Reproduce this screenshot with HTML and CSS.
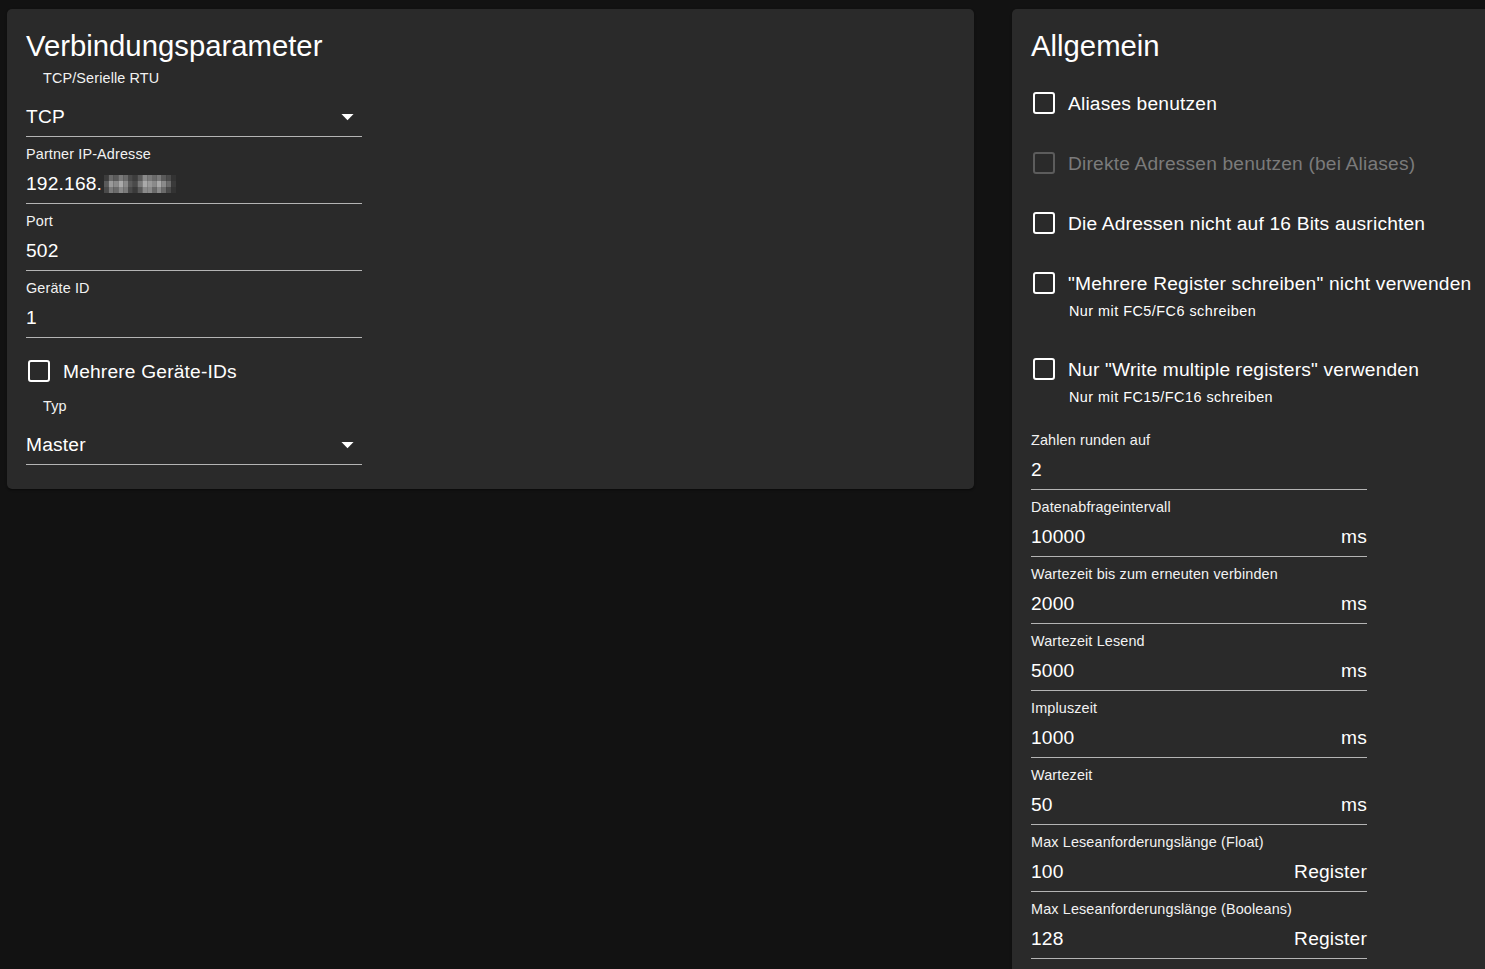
FILE: index.html
```html
<!DOCTYPE html>
<html lang="de">
<head>
<meta charset="utf-8">
<title>Modbus Einstellungen</title>
<link rel="stylesheet" href="styles.css">
</head>
<body>
<div class="page">
  <section class="card card-left">
    <h2 class="card-title">Verbindungsparameter</h2>

    <div class="select select-first">
      <div class="select-label">TCP/Serielle RTU</div>
      <div class="select-row">
        <span class="select-value">TCP</span>
        <svg class="arrow" viewBox="0 0 24 24" width="29" height="29"><path d="M7 10l5 5 5-5z" fill="#fff"/></svg>
      </div>
    </div>

    <div class="field">
      <div class="field-label">Partner IP-Adresse</div>
      <div class="field-row">
        <span class="field-value">192.168.<svg class="blur" width="72" height="18" viewBox="0 0 15 3" preserveAspectRatio="none">
          <rect x="0" y="0" width="1" height="1" fill="#3c3c3c"/><rect x="1" y="0" width="1" height="1" fill="#6a6a6a"/><rect x="2" y="0" width="1" height="1" fill="#5a5a5a"/><rect x="3" y="0" width="1" height="1" fill="#7a7a7a"/><rect x="4" y="0" width="1" height="1" fill="#6a6a6a"/><rect x="5" y="0" width="1" height="1" fill="#4a4a4a"/><rect x="6" y="0" width="1" height="1" fill="#3d3d3d"/><rect x="7" y="0" width="1" height="1" fill="#5a5a5a"/><rect x="8" y="0" width="1" height="1" fill="#8a8a8a"/><rect x="9" y="0" width="1" height="1" fill="#7a7a7a"/><rect x="10" y="0" width="1" height="1" fill="#6a6a6a"/><rect x="11" y="0" width="1" height="1" fill="#7a7a7a"/><rect x="12" y="0" width="1" height="1" fill="#5a5a5a"/><rect x="13" y="0" width="1" height="1" fill="#4a4a4a"/><rect x="14" y="0" width="1" height="1" fill="#333333"/>
          <rect x="0" y="1" width="1" height="1" fill="#5a5a5a"/><rect x="1" y="1" width="1" height="1" fill="#9a9a9a"/><rect x="2" y="1" width="1" height="1" fill="#8a8a8a"/><rect x="3" y="1" width="1" height="1" fill="#aaaaaa"/><rect x="4" y="1" width="1" height="1" fill="#8a8a8a"/><rect x="5" y="1" width="1" height="1" fill="#5a5a5a"/><rect x="6" y="1" width="1" height="1" fill="#4a4a4a"/><rect x="7" y="1" width="1" height="1" fill="#7a7a7a"/><rect x="8" y="1" width="1" height="1" fill="#aaaaaa"/><rect x="9" y="1" width="1" height="1" fill="#9a9a9a"/><rect x="10" y="1" width="1" height="1" fill="#8a8a8a"/><rect x="11" y="1" width="1" height="1" fill="#aaaaaa"/><rect x="12" y="1" width="1" height="1" fill="#8a8a8a"/><rect x="13" y="1" width="1" height="1" fill="#6a6a6a"/><rect x="14" y="1" width="1" height="1" fill="#3a3a3a"/>
          <rect x="0" y="2" width="1" height="1" fill="#4a4a4a"/><rect x="1" y="2" width="1" height="1" fill="#7a7a7a"/><rect x="2" y="2" width="1" height="1" fill="#6a6a6a"/><rect x="3" y="2" width="1" height="1" fill="#8a8a8a"/><rect x="4" y="2" width="1" height="1" fill="#7a7a7a"/><rect x="5" y="2" width="1" height="1" fill="#4a4a4a"/><rect x="6" y="2" width="1" height="1" fill="#3a3a3a"/><rect x="7" y="2" width="1" height="1" fill="#5a5a5a"/><rect x="8" y="2" width="1" height="1" fill="#8a8a8a"/><rect x="9" y="2" width="1" height="1" fill="#8a8a8a"/><rect x="10" y="2" width="1" height="1" fill="#6a6a6a"/><rect x="11" y="2" width="1" height="1" fill="#8a8a8a"/><rect x="12" y="2" width="1" height="1" fill="#6a6a6a"/><rect x="13" y="2" width="1" height="1" fill="#4a4a4a"/><rect x="14" y="2" width="1" height="1" fill="#333333"/>
        </svg></span>
      </div>
    </div>

    <div class="field">
      <div class="field-label">Port</div>
      <div class="field-row"><span class="field-value">502</span></div>
    </div>

    <div class="field">
      <div class="field-label">Geräte ID</div>
      <div class="field-row"><span class="field-value">1</span></div>
    </div>

    <label class="check check-left">
      <span class="box"></span>
      <span class="check-text">Mehrere Geräte-IDs</span>
    </label>

    <div class="select select-second">
      <div class="select-label">Typ</div>
      <div class="select-row">
        <span class="select-value">Master</span>
        <svg class="arrow" viewBox="0 0 24 24" width="29" height="29"><path d="M7 10l5 5 5-5z" fill="#fff"/></svg>
      </div>
    </div>
  </section>

  <section class="card card-right">
    <h2 class="card-title">Allgemein</h2>

    <div class="checks">
      <div class="check-item">
        <label class="check"><span class="box"></span><span class="check-text">Aliases benutzen</span></label>
      </div>
      <div class="check-item">
        <label class="check disabled"><span class="box"></span><span class="check-text">Direkte Adressen benutzen (bei Aliases)</span></label>
      </div>
      <div class="check-item">
        <label class="check"><span class="box"></span><span class="check-text">Die Adressen nicht auf 16 Bits ausrichten</span></label>
      </div>
      <div class="check-item">
        <label class="check"><span class="box"></span><span class="check-text">"Mehrere Register schreiben" nicht verwenden</span></label>
        <div class="helper">Nur mit FC5/FC6 schreiben</div>
      </div>
      <div class="check-item">
        <label class="check"><span class="box"></span><span class="check-text">Nur "Write multiple registers" verwenden</span></label>
        <div class="helper">Nur mit FC15/FC16 schreiben</div>
      </div>
    </div>

    <div class="fields">
      <div class="field">
        <div class="field-label">Zahlen runden auf</div>
        <div class="field-row"><span class="field-value">2</span></div>
      </div>
      <div class="field">
        <div class="field-label">Datenabfrageintervall</div>
        <div class="field-row"><span class="field-value">10000</span><span class="suffix">ms</span></div>
      </div>
      <div class="field">
        <div class="field-label">Wartezeit bis zum erneuten verbinden</div>
        <div class="field-row"><span class="field-value">2000</span><span class="suffix">ms</span></div>
      </div>
      <div class="field">
        <div class="field-label">Wartezeit Lesend</div>
        <div class="field-row"><span class="field-value">5000</span><span class="suffix">ms</span></div>
      </div>
      <div class="field">
        <div class="field-label">Impluszeit</div>
        <div class="field-row"><span class="field-value">1000</span><span class="suffix">ms</span></div>
      </div>
      <div class="field">
        <div class="field-label">Wartezeit</div>
        <div class="field-row"><span class="field-value">50</span><span class="suffix">ms</span></div>
      </div>
      <div class="field">
        <div class="field-label">Max Leseanforderungslänge (Float)</div>
        <div class="field-row"><span class="field-value">100</span><span class="suffix">Register</span></div>
      </div>
      <div class="field">
        <div class="field-label">Max Leseanforderungslänge (Booleans)</div>
        <div class="field-row"><span class="field-value">128</span><span class="suffix">Register</span></div>
      </div>
    </div>
  </section>
</div>
</body>
</html>
```

FILE: styles.css
```css
html, body {
  margin: 0;
  padding: 0;
  background: #121212;
  height: 969px;
  overflow: hidden;
  font-family: "Liberation Sans", Arial, sans-serif;
  color: #fff;
}

.page {
  display: flex;
  align-items: flex-start;
  gap: 38px;
  padding: 9px 0 0 7px;
  height: 960px;
}

.card {
  box-sizing: border-box;
  background: #2a2a2a;
  border-radius: 5px;
  box-shadow: 0 2px 1px -1px rgba(0,0,0,0.2), 0 1px 1px 0 rgba(0,0,0,0.14), 0 1px 3px 0 rgba(0,0,0,0.12);
  padding: 19px 19px 24px 19px;
}

.card-left {
  flex: 0 0 967px;
}

.card-right {
  flex: 1 1 auto;
  min-width: 0;
  height: 960px;
  overflow: hidden;
  padding-right: 0;
  padding-bottom: 0;
  border-radius: 5px 0 0 0;
}

.card-title {
  margin: 0;
  padding-top: 1px;
  font-size: 29.3px;
  line-height: 34px;
  font-weight: 400;
  color: #fff;
}

/* select */
.select {
  width: 336px;
  margin-top: 7px;
}

.select-label {
  font-size: 14.4px;
  line-height: 17px;
  padding-left: 17px;
  color: #f2f2f2;
  letter-spacing: 0.14px;
}

.select-row {
  display: flex;
  align-items: center;
  justify-content: space-between;
  padding: 18px 0 8px 0;
  height: 23px;
  border-bottom: 1px solid #b4b4b4;
}

.select-value {
  font-size: 19.2px;
  line-height: 23px;
  letter-spacing: 0.18px;
}

.arrow {
  display: block;
  margin: -3px 0;
}

/* text fields */
.field {
  width: 336px;
  margin-top: 9px;
}

.field-label {
  font-size: 14.4px;
  line-height: 17px;
  color: #f2f2f2;
  letter-spacing: 0.14px;
}

.field-row {
  display: flex;
  align-items: baseline;
  justify-content: space-between;
  padding: 9px 0 8px 0;
  height: 23px;
  border-bottom: 1px solid #b4b4b4;
}

.field-value {
  font-size: 19.2px;
  line-height: 23px;
  letter-spacing: 0.18px;
  white-space: nowrap;
}

.suffix {
  font-size: 19.2px;
  line-height: 23px;
  letter-spacing: 0.18px;
}

.blur {
  display: inline-block;
  vertical-align: -3px;
  margin-left: 2px;
}

/* checkboxes */
.check {
  display: flex;
  align-items: center;
  height: 40px;
}

.box {
  flex: 0 0 auto;
  box-sizing: border-box;
  width: 22px;
  height: 22px;
  margin-left: 1.5px;
  margin-right: 13.5px;
  border: 2px solid #fff;
  border-radius: 3px;
}

.check-text {
  font-size: 19.2px;
  line-height: 23px;
  letter-spacing: 0.18px;
  white-space: nowrap;
}

.check-left {
  margin-top: 13px;
}

.check.disabled .box {
  border-color: #5c5c5c;
}

.check.disabled .check-text {
  color: #7b7b7b;
}

.checks {
  display: flex;
  flex-direction: column;
}

.check-item {
  margin-top: 20px;
}

.helper {
  font-size: 14.4px;
  line-height: 17px;
  letter-spacing: 0.48px;
  padding-left: 38px;
  margin-bottom: 9px;
  color: #fff;
}

.fields {
  padding-top: 8px;
}
```
